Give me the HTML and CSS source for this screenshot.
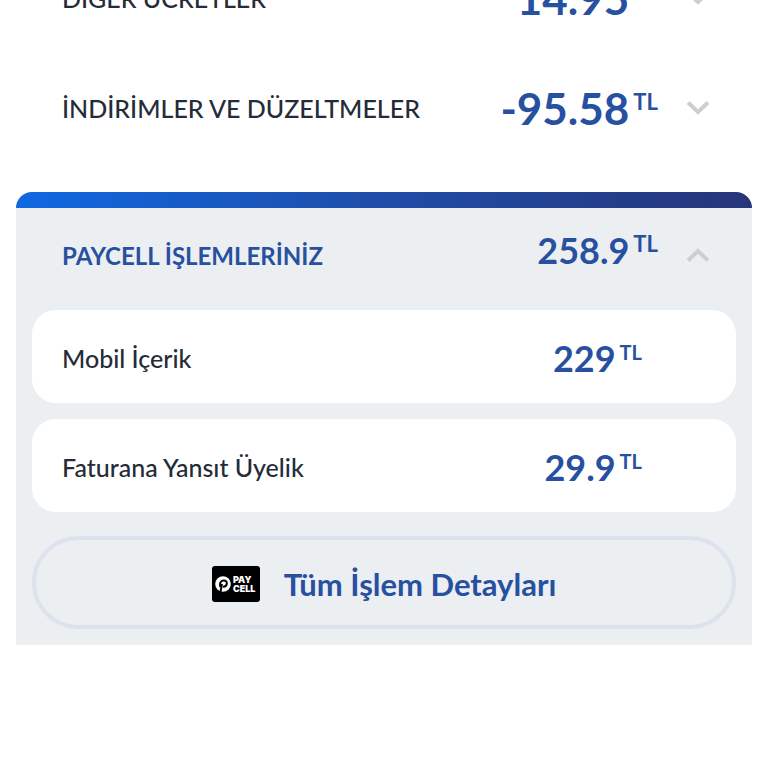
FILE: index.html
```html
<!DOCTYPE html>
<html lang="tr">
<head>
<meta charset="utf-8">
<meta name="viewport" content="width=device-width, initial-scale=1">
<title>Fatura Detayları</title>
<link rel="stylesheet" href="styles.css">
</head>
<body>
<main class="bill">
  <section class="summary">
    <button class="row" type="button" aria-expanded="false">
      <span class="row-label">DİĞER ÜCRETLER</span>
      <span class="amount amount-large">14.95<span class="unit">TL</span></span>
      <svg class="chevron" viewBox="0 0 24 16" aria-hidden="true"><path d="M2 2.500 12 12 22 2.500"/></svg>
    </button>
    <button class="row" type="button" aria-expanded="false">
      <span class="row-label">İNDİRİMLER VE DÜZELTMELER</span>
      <span class="amount amount-large">-95.58<span class="unit">TL</span></span>
      <svg class="chevron" viewBox="0 0 24 16" aria-hidden="true"><path d="M2 2.500 12 12 22 2.500"/></svg>
    </button>
  </section>

  <section class="panel">
    <button class="row panel-head" type="button" aria-expanded="true">
      <span class="row-label">PAYCELL İŞLEMLERİNİZ</span>
      <span class="amount">258.9<span class="unit">TL</span></span>
      <svg class="chevron" viewBox="0 0 24 16" aria-hidden="true"><path d="M2 12.500 12 3 22 12.500"/></svg>
    </button>
    <ul class="cards">
      <li class="card">
        <span class="card-label">Mobil İçerik</span>
        <span class="amount">229<span class="unit">TL</span></span>
      </li>
      <li class="card">
        <span class="card-label">Faturana Yansıt Üyelik</span>
        <span class="amount">29.9<span class="unit">TL</span></span>
      </li>
    </ul>
    <button class="details" type="button">
      <svg class="logo" viewBox="0 0 48 36" role="img" aria-label="Paycell">
        <rect width="48" height="36" rx="3" fill="#000"/>
        <circle cx="11" cy="18" r="7.800" fill="#fff"/>
        <path d="M8.300 26.500 10 18" fill="none" stroke="#000" stroke-width="2"/>
        <path d="M8.300 21C7 17 9 14.500 11.800 14.500c2.200 0 3.200 1.300 3 3.200-.2 2-1.700 3.100-3.800 3" fill="none" stroke="#000" stroke-width="2"/>
        <text class="logo-text" x="21" y="17">PAY</text>
        <text class="logo-text" x="21" y="26">CELL</text>
      </svg>
      <span>Tüm İşlem Detayları</span>
    </button>
  </section>
</main>
</body>
</html>
```
FILE: styles.css
```css
* {
  box-sizing: border-box;
}

body {
  margin: 0;
  background: #fff;
  color: #252c38;
  font-family: Lato, "Open Sans", sans-serif;
}

button {
  border: 0;
  background: none;
  color: inherit;
  font: inherit;
  text-align: left;
  cursor: pointer;
}

.bill {
  padding: 0 16px;
  overflow: hidden;
}

/* The list is scrolled, so its first row starts above the window. */
.summary {
  margin-top: -57px;
  margin-bottom: 29px;
}

.row {
  display: flex;
  align-items: center;
  width: 100%;
  height: 110px;
  padding: 0 42px 0 46px;
}

.row-label {
  flex: 1;
  font-size: 25px;
  line-height: 32px;
  font-weight: 500;
}

.amount {
  display: flex;
  align-items: flex-start;
  gap: 4px;
  color: #2850a0;
  font-size: 36px;
  line-height: 40px;
  font-weight: 700;
}

.amount-large {
  font-size: 44px;
  line-height: 48px;
}

.unit {
  font-size: 20px;
  line-height: 28px;
  font-weight: 700;
}

.amount-large .unit {
  line-height: 36px;
}

.row .unit {
  font-size: 22px;
}

.chevron {
  width: 24px;
  height: 16px;
  margin-left: 28px;
  fill: none;
  stroke: #ccced1;
  stroke-width: 4;
}

.panel {
  padding: 0 16px 16px;
  border-radius: 16px 16px 0 0;
  background: #ebeff2;
}

.panel::before {
  content: "";
  display: block;
  height: 16px;
  margin: 0 -16px;
  border-radius: 16px 16px 0 0;
  background: linear-gradient(90deg, #0f68e2, #1f4da8 50%, #263579);
}

.panel-head {
  height: 102px;
  padding: 0 26px 6px 30px;
}

.panel-head .row-label {
  color: #2850a0;
  font-size: 24px;
  font-weight: 700;
}

.panel-head .amount {
  padding-bottom: 12px;
}

.cards {
  display: flex;
  flex-direction: column;
  gap: 16px;
  margin: 0 0 24px;
  padding: 0;
  list-style: none;
}

.card {
  display: flex;
  align-items: center;
  justify-content: space-between;
  height: 93px;
  padding: 2px 94px 0 30px;
  border-radius: 24px;
  background: #fff;
}

.card-label {
  font-size: 25px;
  line-height: 32px;
  font-weight: 500;
}

.details {
  display: flex;
  align-items: center;
  justify-content: center;
  gap: 24px;
  width: 100%;
  height: 93px;
  padding: 2px 0 0;
  border: 4px solid #dde2ee;
  border-radius: 48px;
  color: #2850a0;
  font-size: 31px;
  line-height: 36px;
  font-weight: 700;
}

.logo {
  width: 48px;
  height: 36px;
}

.logo-text {
  fill: #fff;
  font-family: Inter, sans-serif;
  font-size: 9px;
  font-weight: 900;
}
```
